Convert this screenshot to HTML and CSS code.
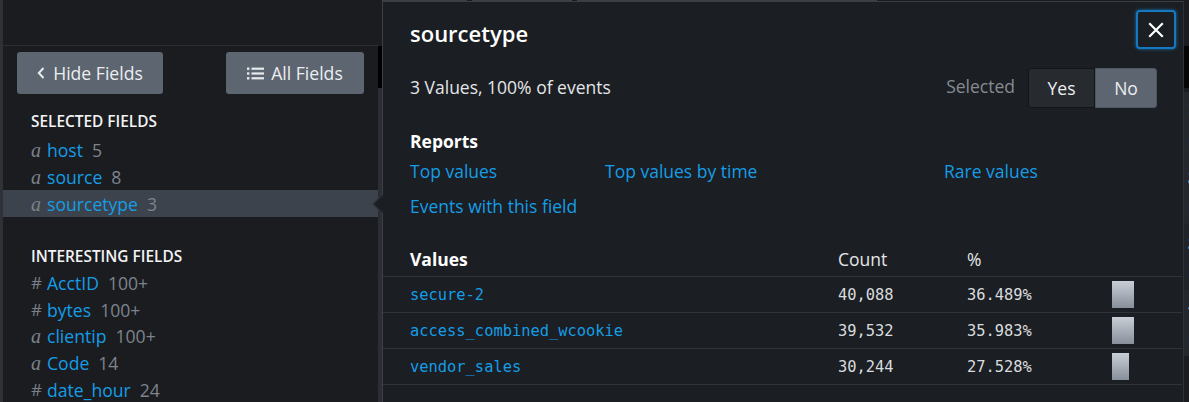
FILE: index.html
```html
<!DOCTYPE html>
<html>
<head>
<meta charset="utf-8">
<link rel="stylesheet" href="styles.css">
</head>
<body>
<div class="app">
  <aside class="sidebar">
    <div class="sidebar-top"></div>
    <div class="sidebar-buttons">
      <button class="btn btn-hide">
        <svg width="8" height="12" viewBox="0 0 8 12"><path d="M6.5 1 L1.8 6 L6.5 11" fill="none" stroke="#e8eaed" stroke-width="2"/></svg>
        <span>Hide Fields</span>
      </button>
      <button class="btn btn-all">
        <svg width="17" height="13" viewBox="0 0 17 13"><g fill="#e8eaed"><rect x="0" y="0.5" width="2.4" height="2.4"/><rect x="0" y="5.3" width="2.4" height="2.4"/><rect x="0" y="10.1" width="2.4" height="2.4"/><rect x="4.5" y="0.6" width="12.5" height="2.2"/><rect x="4.5" y="5.4" width="12.5" height="2.2"/><rect x="4.5" y="10.2" width="12.5" height="2.2"/></g></svg>
        <span>All Fields</span>
      </button>
    </div>
    <div class="section-title first">SELECTED FIELDS</div>
    <ul class="fields">
      <li class="field"><span class="ftype str">a</span><span class="fname">host</span><span class="fcount">5</span></li>
      <li class="field"><span class="ftype str">a</span><span class="fname">source</span><span class="fcount">8</span></li>
      <li class="field active"><span class="ftype str">a</span><span class="fname">sourcetype</span><span class="fcount">3</span></li>
    </ul>
    <div class="section-title second">INTERESTING FIELDS</div>
    <ul class="fields interesting">
      <li class="field"><span class="ftype num">#</span><span class="fname">AcctID</span><span class="fcount">100+</span></li>
      <li class="field"><span class="ftype num">#</span><span class="fname">bytes</span><span class="fcount">100+</span></li>
      <li class="field"><span class="ftype str">a</span><span class="fname">clientip</span><span class="fcount">100+</span></li>
      <li class="field"><span class="ftype str">a</span><span class="fname">Code</span><span class="fcount">14</span></li>
      <li class="field"><span class="ftype num">#</span><span class="fname">date_hour</span><span class="fcount">24</span></li>
    </ul>
  </aside>
  <div class="scrollbar"><div class="scroll-top"></div></div>
  <main class="main">
    <div class="tabs"><div class="tab t1"></div><div class="tab t2"></div><div class="tab t3"></div></div>
    <div class="band"></div>
    <div class="events">
      <div class="ev"><span>:</span></div>
      <div class="ev"><span>r</span></div>
      <div class="ev"><span>g</span></div>
      <div class="ev"><span>r</span></div>
      <div class="ev alt"><span>g</span></div>
      <div class="ev alt"><span>r</span></div>
      <div class="ev"><span>4</span></div>
      <div class="ev"><span>r</span></div>
    </div>
  </main>

  <section class="popup">
    <div class="pop-head">
      <h1 class="pop-title">sourcetype</h1>
      <button class="close" aria-label="Close">
        <svg width="16" height="16" viewBox="0 0 16 16"><path d="M2 2 L14 14 M14 2 L2 14" stroke="#ffffff" stroke-width="2.2" stroke-linecap="square"/></svg>
      </button>
    </div>
    <div class="pop-summary">
      <span class="summary">3 Values, 100% of events</span>
      <div class="selected">
        <span class="sel-label">Selected</span>
        <div class="toggle">
          <button class="tg tg-yes">Yes</button>
          <button class="tg tg-no">No</button>
        </div>
      </div>
    </div>
    <h2 class="reports-title">Reports</h2>
    <div class="reports">
      <a class="link">Top values</a>
      <a class="link">Top values by time</a>
      <a class="link">Rare values</a>
      <a class="link">Events with this field</a>
    </div>
    <div class="vtable">
      <div class="vrow vhead">
        <div class="c-val">Values</div><div class="c-count">Count</div><div class="c-pct">%</div><div class="c-bar"></div>
      </div>
      <div class="vrow">
        <div class="c-val mono link">secure-2</div><div class="c-count mono">40,088</div><div class="c-pct mono">36.489%</div><div class="c-bar"><div class="bar" style="width:22px"></div></div>
      </div>
      <div class="vrow">
        <div class="c-val mono link">access_combined_wcookie</div><div class="c-count mono">39,532</div><div class="c-pct mono">35.983%</div><div class="c-bar"><div class="bar" style="width:21.7px"></div></div>
      </div>
      <div class="vrow">
        <div class="c-val mono link">vendor_sales</div><div class="c-count mono">30,244</div><div class="c-pct mono">27.528%</div><div class="c-bar"><div class="bar" style="width:16.6px"></div></div>
      </div>
    </div>
  </section>
</div>
</body>
</html>
```

FILE: styles.css
```css
* { box-sizing: border-box; }
html, body { margin: 0; padding: 0; }
body {
  width: 1189px;
  height: 402px;
  overflow: hidden;
  background: #1a1c20;
  font-family: "Open Sans", "Liberation Sans", sans-serif;
  color: #e4e6e9;
}
ul { list-style: none; margin: 0; padding: 0; }
h1, h2 { margin: 0; }
button { font-family: inherit; border: 0; cursor: pointer; }

.app {
  position: relative;
  display: flex;
  height: 402px;
  overflow: hidden;
}

/* ---------- sidebar ---------- */
.sidebar {
  width: 378px;
  flex: none;
  border-left: 3px solid #2e3136;
  background: #1a1c20;
}
.sidebar-top {
  height: 46px;
  border-bottom: 1px solid #2c3035;
}
.sidebar-buttons {
  display: flex;
  justify-content: space-between;
  padding: 6px 14px 0 14px;
}
.btn {
  height: 42px;
  border-radius: 3px;
  background: #5c6570;
  color: #eceef0;
  font-size: 17.6px;
  line-height: 24px;
  display: flex;
  align-items: center;
  justify-content: center;
  gap: 8px;
}
.btn-hide { width: 146px; }
.btn-all { width: 138px; gap: 7px; }

.section-title {
  font-size: 15.4px;
  font-weight: 600;
  color: #f2f3f5;
  line-height: 20px;
  padding-left: 28px;
}
.section-title.first { margin-top: 18px; }
.section-title.second { margin-top: 30px; }
.fields { margin-top: 4px; }
.interesting { margin-top: 3px; }
.field {
  height: 27px;
  display: flex;
  align-items: center;
  padding-left: 28px;
  font-size: 17.6px;
  line-height: 24px;
}
.interesting .field { height: 26.6px; }
.field.active { background: #3c434c; }
.ftype {
  width: 16px;
  color: #7a818a;
}
.ftype.str {
  font-family: "Liberation Serif", "DejaVu Serif", serif;
  font-style: italic;
  font-size: 20px;
}
.ftype.num { font-size: 17px; }
.fname { color: #159de6; }
.fcount { color: #7d848d; margin-left: 9px; }

/* ---------- scrollbar ---------- */
.scrollbar {
  width: 4px;
  flex: none;
  padding-top: 46px;
  background: #1a1c20;
}
.scroll-top { height: 42px; background: #000; }
.scrollbar::after { content: ""; display: block; height: 314px; background: #2b2e33; }

/* ---------- underlying main ---------- */
.main { flex: 1; background: #1a1c20; }
.tabs { height: 46px; display: flex; gap: 5px; }
.tab { height: 37px; background: #3c4047; border-radius: 0 0 3px 3px; }
.t1 { width: 85px; }
.t2 { width: 100px; }
.t3 { width: 300px; }
.band { height: 42px; background: #050505; }
.events { padding-top: 4px; }
.ev {
  height: 33px;
  padding-left: 806px;
  color: #9aa0a8;
  font-size: 16px;
  line-height: 33px;
  background: #24272b;
}
.ev.alt { background: #202327; }

/* ---------- popup ---------- */
.popup {
  position: absolute;
  left: 382px;
  top: 1px;
  width: 802px;
  height: 430px;
  background: #1b1e22;
  border: 1px solid #3a3f46;
  border-right-color: #2d3137;
}
.popup::before, .popup::after {
  content: "";
  position: absolute;
  top: 192px;
  width: 0; height: 0;
  border-top: 10px solid transparent;
  border-bottom: 10px solid transparent;
}
.popup::before { left: -11px; border-right: 10px solid #2f3339; }
.popup::after { left: -9px; border-right: 10px solid #1b1e22; }

.pop-head {
  display: flex;
  justify-content: space-between;
  align-items: flex-start;
  padding: 8px 7px 0 27px;
}
.pop-title {
  margin-top: 8px;
  font-size: 22px;
  font-weight: 600;
  line-height: 30px;
  color: #ffffff;
}
.close {
  width: 40px;
  height: 39px;
  border-radius: 4px;
  background: #1b1e22;
  border: 2px solid #1479c0;
  box-shadow: 0 0 3px 1px rgba(20,121,192,0.55);
  display: flex;
  align-items: center;
  justify-content: center;
  padding: 0;
}

.pop-summary {
  display: flex;
  justify-content: space-between;
  align-items: center;
  padding: 0 26px 0 27px;
  margin-top: 19px;
}
.summary { font-size: 17.5px; line-height: 24px; color: #e4e6e9; margin-top: -3px; }
.selected { display: flex; align-items: center; gap: 13px; }
.sel-label { font-size: 17.5px; line-height: 24px; color: #858b93; margin-top: -5px; }
.toggle { display: flex; height: 40px; }
.tg {
  font-size: 17.5px;
  color: #eceef0;
  height: 40px;
  border: 1px solid #131518;
}
.tg-yes {
  width: 67px;
  background: #272a2f;
  border-radius: 3px 0 0 3px;
}
.tg-no {
  width: 62px;
  background: #5c6570;
  border-color: #4d555f;
  border-radius: 0 3px 3px 0;
}

.reports-title {
  margin-top: 22px;
  padding-left: 27px;
  font-size: 17.5px;
  font-weight: 700;
  line-height: 22px;
  color: #ffffff;
}
.reports {
  display: grid;
  grid-template-columns: 195px 339px auto;
  grid-auto-rows: 35px;
  padding-left: 27px;
  align-items: center;
  margin-top: 1px;
}
.link { color: #159de6; font-size: 17.5px; line-height: 24px; }

.vtable { margin-top: 18px; }
.vrow {
  display: grid;
  grid-template-columns: 455px 129px 145px auto;
  height: 36px;
  align-items: center;
  border-bottom: 1px solid #30343a;
  margin-right: 1px;
}
.vhead { font-size: 17.5px; line-height: 24px; }
.vhead .c-val { font-weight: 700; color: #ffffff; }
.vhead .c-count, .vhead .c-pct { color: #e4e6e9; }
.c-val { padding-left: 27px; }
.mono {
  font-family: "DejaVu Sans Mono", "Liberation Mono", monospace;
  font-size: 15.4px;
  line-height: 20px;
}
.c-count.mono, .c-pct.mono { color: #d9dcdf; }
.c-bar { display: flex; align-items: center; }
.bar {
  height: 27px;
  background: linear-gradient(#c9ced6, #878f9a);
}
```
